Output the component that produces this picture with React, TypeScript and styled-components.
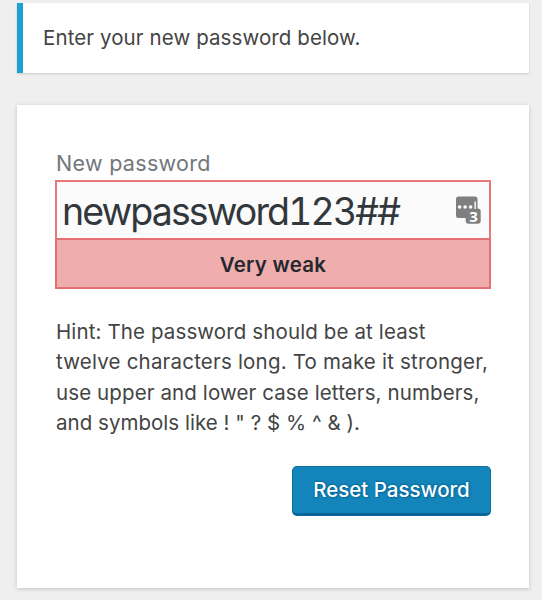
import React from "react";
import styled, { createGlobalStyle } from "styled-components";

const GlobalStyle = createGlobalStyle`
  * { box-sizing: border-box; }
  html, body { margin: 0; }
  body {
    background: #efefef;
    color: #444;
    font-family: Inter, "Liberation Sans", sans-serif;
    font-size: 20.5px;
    overflow: hidden;
  }
`;

const Page = styled.main`
  width: 542px;
  height: 600px;
  padding: 3px 13px 0 17px;
`;

const Notice = styled.p`
  height: 70px;
  margin: 0 0 32px;
  padding: 0 20px;
  border-left: 6px solid #1ea1d2;
  background: #fff;
  box-shadow: 0 1px 2px rgba(0, 0, 0, 0.17);
  letter-spacing: 0.1px;
  line-height: 70px;
  white-space: nowrap;
`;

const Card = styled.form`
  display: flex;
  flex-direction: column;
  height: 483px;
  padding: 44px 38px 0;
  background: #fff;
  box-shadow: 0 1px 4px rgba(0, 0, 0, 0.19);
`;

const Label = styled.label`
  height: 31px;
  padding-left: 1px;
  color: #72777c;
  font-size: 21.5px;
  letter-spacing: 0.3px;
  line-height: 28px;
`;

const Field = styled.div`
  display: flex;
  align-items: center;
  justify-content: space-between;
  height: 58px;
  padding: 0 8px 0 5px;
  border: 2px solid #e9777a;
  border-bottom: 0;
  background: #fbfbfb;
`;

const PasswordInput = styled.input`
  width: 370px;
  height: 54px;
  padding: 2px 0 0;
  border: 0;
  outline: 0;
  background: transparent;
  color: #32373c;
  font: 400 37.5px Inter, "Liberation Sans", sans-serif;
  font-variant-numeric: tabular-nums;
  letter-spacing: -1.9px;
`;

const Strength = styled.div`
  height: 51px;
  border: 2px solid #e57074;
  background: #efadad;
  color: #23282d;
  font-weight: 600;
  letter-spacing: 0.25px;
  line-height: 49px;
  text-align: center;
`;

const Hint = styled.p`
  margin: 28px 0 27px;
  padding-left: 1px;
  line-height: 30.4px;
  white-space: nowrap;
`;

const HintLine = styled.span<{ $track: number }>`
  display: block;
  letter-spacing: ${(p) => p.$track}px;
`;

const Submit = styled.button`
  align-self: flex-end;
  width: 199px;
  height: 50px;
  padding: 0;
  border: 1px solid #0c70a3;
  border-bottom: 3px solid #086798;
  border-radius: 5px;
  background: #1485ba;
  color: #fff;
  font: 500 20.5px Inter, "Liberation Sans", sans-serif;
  text-shadow: 0 -1px 2px #006799, 1px 1px 2px #006799;
`;

const ManagerIcon = () => (
  <svg width="26" height="29" viewBox="0 0 26 29" aria-hidden="true">
    <rect x="1" y="0.5" width="21.5" height="21.5" rx="2.5" fill="#7f7f7f" />
    <rect x="10.7" y="12.5" width="15" height="15.3" rx="3" fill="#7f7f7f" />
    <circle cx="4.6" cy="11" r="1.8" fill="#fff" />
    <circle cx="10.1" cy="11" r="1.8" fill="#fff" />
    <circle cx="15.6" cy="11" r="1.8" fill="#fff" />
    <path d="M20.2 5.5v7.5" stroke="#eee" strokeWidth="1.6" />
    <text x="18.6" y="25.8" fill="#fff" textAnchor="middle" fontFamily="Open Sans" fontWeight="700" fontSize="15">3</text>
  </svg>
);

const hint = [
  { text: "Hint: The password should be at least", track: 0.12 },
  { text: "twelve characters long. To make it stronger,", track: 0.2 },
  { text: "use upper and lower case letters, numbers,", track: 0.11 },
  { text: "and symbols like ! \" ? $ % ^ & ).", track: 0.03 },
];

export default function App() {
  return (
    <Page>
      <GlobalStyle />
      <Notice>Enter your new password below.</Notice>
      <Card>
        <Label htmlFor="pass">New password</Label>
        <Field>
          <PasswordInput id="pass" defaultValue="newpassword123##" spellCheck={false} />
          <ManagerIcon />
        </Field>
        <Strength>Very weak</Strength>
        <Hint>
          {hint.map((line) => (
            <HintLine key={line.text} $track={line.track}>{line.text}</HintLine>
          ))}
        </Hint>
        <Submit type="button">Reset Password</Submit>
      </Card>
    </Page>
  );
}
